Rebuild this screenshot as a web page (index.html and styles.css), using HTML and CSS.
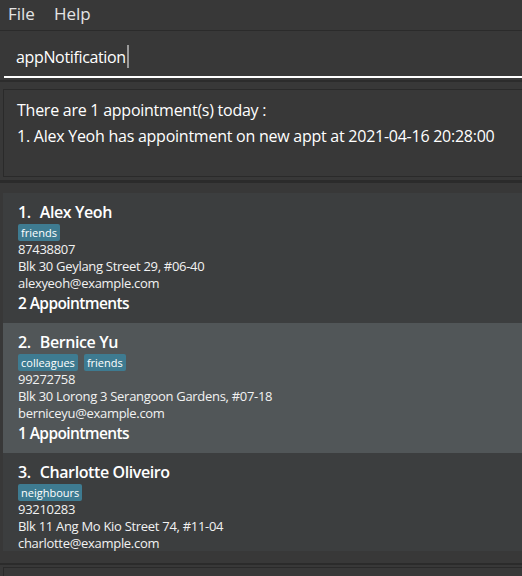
FILE: index.html
```html
<!DOCTYPE html>
<html>
<head>
<meta charset="utf-8">
<link rel="stylesheet" href="styles.css">
</head>
<body>
<div class="app">
  <div class="menubar">
    <span class="menu-item">File</span>
    <span class="menu-item">Help</span>
  </div>
  <div class="command-pane">
    <div class="command-box">
      <span class="command-text">appNotification</span><span class="caret"></span>
    </div>
  </div>
  <div class="divider"></div>
  <div class="result-pane">
    <div class="result-box">
      <div class="result-line">There are 1 appointment(s) today :</div>
      <div class="result-line">1. Alex Yeoh has appointment on new appt at 2021-04-16 20:28:00</div>
    </div>
  </div>
  <div class="divider thick"></div>
  <div class="list-pane">
    <div class="list">
      <div class="card even">
        <div class="name"><span class="idx">1.</span><span>Alex Yeoh</span></div>
        <div class="tags"><span class="tag">friends</span></div>
        <div class="small">87438807</div>
        <div class="small">Blk 30 Geylang Street 29, #06-40</div>
        <div class="small">alexyeoh@example.com</div>
        <div class="appts">2 Appointments</div>
      </div>
      <div class="card odd">
        <div class="name"><span class="idx">2.</span><span>Bernice Yu</span></div>
        <div class="tags"><span class="tag">colleagues</span><span class="tag">friends</span></div>
        <div class="small">99272758</div>
        <div class="small">Blk 30 Lorong 3 Serangoon Gardens, #07-18</div>
        <div class="small">berniceyu@example.com</div>
        <div class="appts">1 Appointments</div>
      </div>
      <div class="card even last">
        <div class="name"><span class="idx">3.</span><span>Charlotte Oliveiro</span></div>
        <div class="tags"><span class="tag">neighbours</span></div>
        <div class="small">93210283</div>
        <div class="small">Blk 11 Ang Mo Kio Street 74, #11-04</div>
        <div class="small">charlotte@example.com</div>
      </div>
    </div>
  </div>
  <div class="footer-pane">
    <div class="status-box"></div>
  </div>
</div>
</body>
</html>
```

FILE: styles.css
```css
html, body {
  margin: 0;
  padding: 0;
}
body {
  background: #383838;
  font-family: "Open Sans", "Noto Sans", sans-serif;
  color: #ffffff;
  width: 522px;
  height: 576px;
  overflow: hidden;
}
.app {
  display: flex;
  flex-direction: column;
  height: 576px;
}
.menubar {
  height: 31px;
  flex: none;
  border-bottom: 1px solid #2b2b2b;
  display: flex;
  align-items: center;
  gap: 19px;
  padding-left: 8px;
  padding-bottom: 2px;
  box-sizing: border-box;
  background: #383838;
}
.menu-item {
  font-size: 17px;
  color: #e4e4e4;
  line-height: 26px;
}
.command-pane {
  height: 49px;
  flex: none;
  padding-left: 4px;
  box-sizing: border-box;
}
.command-box {
  height: 47px;
  border-bottom: 2px solid #ffffff;
  box-sizing: border-box;
  display: flex;
  align-items: center;
  padding-left: 12px;
  padding-top: 6px;
}
.command-text {
  font-size: 16px;
  color: #ffffff;
  letter-spacing: -0.35px;
}
.caret {
  display: inline-block;
  width: 2px;
  height: 23px;
  background: #9a9a9a;
  margin-left: 1px;
}
.divider {
  height: 2px;
  flex: none;
  background: #2c2c2c;
}
.divider.thick {
  height: 3px;
  background: #2b2b2b;
  margin-top: 3px;
}
.result-pane {
  flex: none;
  padding: 7px 0 0 3px;
}
.result-box {
  height: 88px;
  border: 1px solid #2a2a2a;
  border-right: none;
  box-sizing: border-box;
  padding: 7px 13px;
  background: #383838;
}
.result-line {
  font-size: 16px;
  line-height: 26px;
  color: #ffffff;
  letter-spacing: -0.25px;
  white-space: nowrap;
}
.list-pane {
  flex: none;
  padding: 10px 0 0 3px;
  height: 380px;
  box-sizing: border-box;
}
.list {
  height: 358px;
  overflow: hidden;
}
.card {
  padding: 8px 0 8px 15px;
  height: 130px;
  box-sizing: border-box;
}
.card.even {
  background: #3c3e3f;
}
.card.odd {
  background: #515658;
}
.name {
  font-size: 16px;
  font-weight: 600;
  line-height: 22px;
  display: flex;
  gap: 9px;
  letter-spacing: -0.4px;
}
.tags {
  display: flex;
  gap: 6px;
  margin-top: 1px;
  height: 17px;
}
.tag {
  background: #3e7b91;
  border-radius: 2px;
  font-size: 11px;
  line-height: 17px;
  padding: 0 3px;
  color: #ffffff;
}
.small {
  font-size: 13px;
  line-height: 17px;
  color: #f2f2f2;
  letter-spacing: -0.3px;
}
.appts {
  font-size: 15.5px;
  line-height: 22px;
  font-weight: 600;
  letter-spacing: -0.6px;
}
.footer-pane {
  flex: 1;
  border-top: 2px solid #2b2b2b;
  padding: 2px 0 0 3px;
}
.status-box {
  height: 20px;
  border: 1px solid #2a2a2a;
  border-right: none;
}
```
